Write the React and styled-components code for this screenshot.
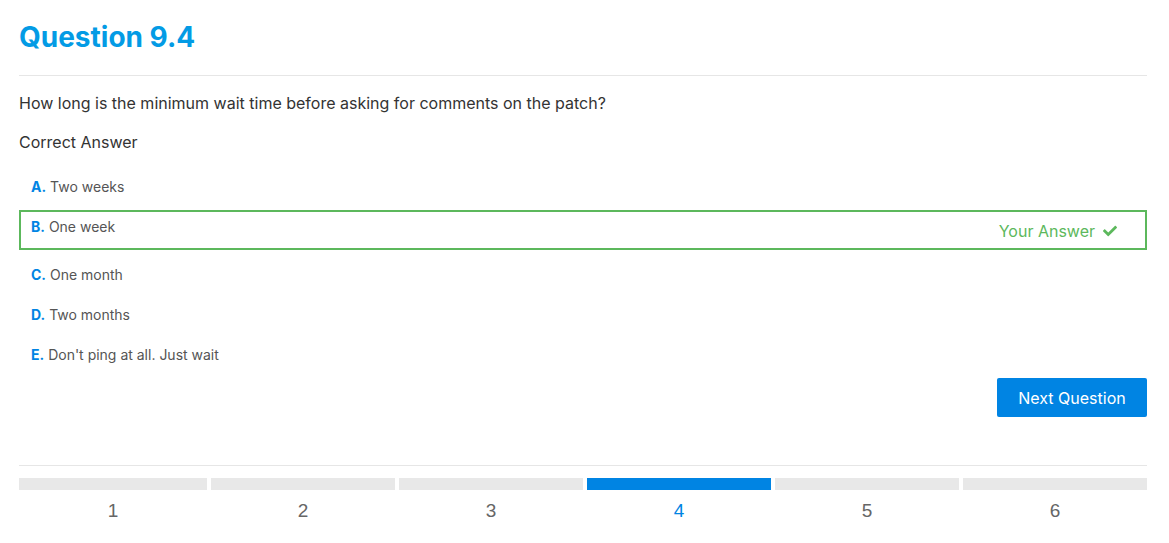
import React from 'react';
import styled, { createGlobalStyle } from 'styled-components';
import { FaCheck } from 'react-icons/fa';

const GlobalStyle = createGlobalStyle`
  body {
    margin: 0;
    background: #ffffff;
    font-family: Inter, "Noto Sans", sans-serif;
  }
`;

const Page = styled.div`
  padding: 0 22px 0 19px;
`;

const Title = styled.h1`
  margin: 20px 0 21px;
  font-size: 28px;
  line-height: 34px;
  font-weight: 700;
  color: #039be5;
`;

const Rule = styled.div`
  border-top: 1px solid #e6e6e6;
`;

const Prompt = styled.p`
  margin: ${(p) => p.top}px 0 0;
  font-size: 16px;
  line-height: 24px;
  color: #333333;
`;

const Options = styled.div`
  margin-top: 13px;
  display: flex;
  flex-direction: column;
`;

const Option = styled.div`
  box-sizing: border-box;
  height: 40px;
  display: flex;
  align-items: ${(p) => (p.$picked ? 'flex-start' : 'center')};
  justify-content: space-between;
  padding: ${(p) => (p.$picked ? '5px 28px 5px 10px' : '0 12px')};
  margin: ${(p) => (p.$picked ? '3px 0 5px' : '0')};
  border: ${(p) => (p.$picked ? '2px solid #5cb85c' : 'none')};
  font-size: 14px;
  line-height: 20px;
  color: #555555;
`;

const Letter = styled.b`
  color: #0084e3;
  font-weight: 700;
`;

const Verdict = styled.span`
  display: flex;
  align-items: center;
  gap: 8px;
  margin-top: 2px;
  font-size: 16px;
  line-height: 24px;
  color: #5cb85c;
`;

const Actions = styled.div`
  display: flex;
  justify-content: flex-end;
  margin: 3px 0 48px;
`;

const NextButton = styled.button`
  width: 150px;
  height: 39px;
  border: none;
  border-radius: 2px;
  background: #0084e3;
  color: #ffffff;
  font-family: Inter, "Noto Sans", sans-serif;
  font-size: 16px;
`;

const Pager = styled.div`
  display: grid;
  grid-template-columns: repeat(6, 1fr);
  margin-top: 12px;
`;

const Step = styled.div`
  display: flex;
  flex-direction: column;
  padding-left: ${(p) => (p.$first ? 0 : 4)}px;
`;

const Bar = styled.div`
  height: 12px;
  background: ${(p) => (p.$active ? '#0084e3' : '#e8e8e8')};
`;

const StepNum = styled.div`
  margin-top: 9px;
  text-align: center;
  font-family: "Liberation Sans", Arial, sans-serif;
  font-size: 19px;
  line-height: 24px;
  color: ${(p) => (p.$active ? '#0084e3' : '#666666')};
`;

const answers = [
  ['A', 'Two weeks'],
  ['B', 'One week'],
  ['C', 'One month'],
  ['D', 'Two months'],
  ['E', "Don't ping at all. Just wait"],
];

export default function App() {
  return (
    <Page>
      <GlobalStyle />
      <Title>Question 9.4</Title>
      <Rule />
      <Prompt top={15}>How long is the minimum wait time before asking for comments on the patch?</Prompt>
      <Prompt top={15}>Correct Answer</Prompt>
      <Options>
        {answers.map(([l, t]) => (
          <Option key={l} $picked={l === 'B'}>
            <span>
              <Letter>{l}.</Letter> {t}
            </span>
            {l === 'B' && (
              <Verdict>
                Your Answer <FaCheck size={14} />
              </Verdict>
            )}
          </Option>
        ))}
      </Options>
      <Actions>
        <NextButton>Next Question</NextButton>
      </Actions>
      <Rule />
      <Pager>
        {[1, 2, 3, 4, 5, 6].map((n) => (
          <Step key={n} $first={n === 1}>
            <Bar $active={n === 4} />
            <StepNum $active={n === 4}>{n}</StepNum>
          </Step>
        ))}
      </Pager>
    </Page>
  );
}
